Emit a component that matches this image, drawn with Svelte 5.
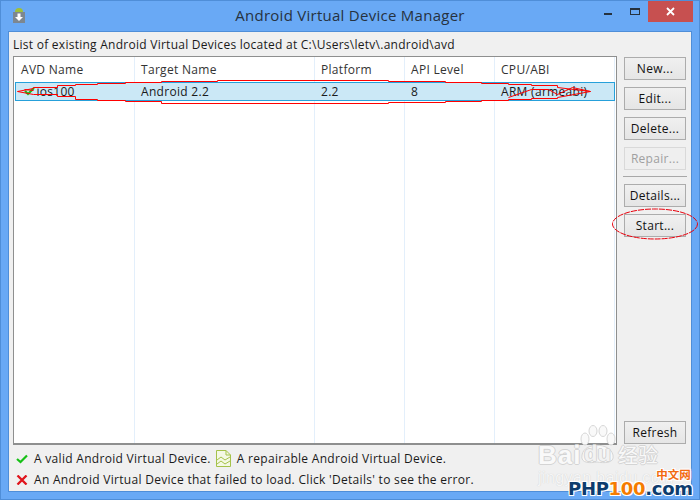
<script>
  const columns = [
    { name: 'AVD Name', width: 120 },
    { name: 'Target Name', width: 180 },
    { name: 'Platform', width: 90 },
    { name: 'API Level', width: 90 },
    { name: 'CPU/ABI', width: 120 },
  ];
  const row = ['ios100', 'Android 2.2', '2.2', '8', 'ARM (armeabi)'];
  const buttonGroups = [
    [{ label: 'New...' }, { label: 'Edit...' }, { label: 'Delete...' }, { label: 'Repair...', disabled: true }],
    [{ label: 'Details...' }, { label: 'Start...' }],
  ];
  // hand-drawn red marks around the selected row
  const scribbles = [
    'M17 91 L33 88 V87 H57 V85 H75 V84 H97 V83 H125 V82 H161 V81 H217 V80 H388 V81 H445 V82 H481 V83 H508 V84 H531 V85 H557 V87 L590 91',
    'M17 91 L33 94 H57 V96 H75 V99 H97 V100 H125 V101 H161 V103 H388 V102 H445 V101 H481 V100 H508 V99 H531 V98 H557 V97 L590 91',
    'M24 89 L33 90 M508 97 L531 89 H548 L557 94 L572 87 L590 91',
  ];
</script>

<div class="window">
  <header class="titlebar">
    <svg class="app-icon" width="14" height="17" viewBox="0 0 14 17">
      <path d="M3 5 A4 4 0 0 1 11 5 Z" fill="#9fbf3b" />
      <rect x="1" y="5" width="12" height="11" fill="#7d8790" />
      <path d="M5.5 6.5 H8.5 V10 H11 L7 14 L3 10 H5.5 Z" fill="#fff" />
    </svg>
    <h1>Android Virtual Device Manager</h1>
    <div class="controls">
      <span class="min"></span>
      <span class="max"></span>
      <span class="close">
        <svg width="9" height="9" viewBox="0 0 9 9">
          <path d="M1 1 L8 8 M8 1 L1 8" stroke="#fff" stroke-width="1.8" />
        </svg>
      </span>
    </div>
  </header>

  <main class="client">
    <p class="location">List of existing Android Virtual Devices located at C:\Users\letv\.android\avd</p>

    <div class="body">
      <div class="table">
        <div class="grid-lines">
          {#each columns as col (col.name)}
            <span style="width: {col.width}px"></span>
          {/each}
        </div>
        <div class="head">
          {#each columns as col (col.name)}
            <span style="width: {col.width}px">{col.name}</span>
          {/each}
        </div>
        <div class="selected">
          {#each row as cell, i (i)}
            <span style="width: {columns[i].width}px">
              {#if i === 0}
                <svg class="check" width="11" height="9" viewBox="0 0 11 9">
                  <path d="M1 4 L4 7 L10 1" fill="none" stroke="#16c016" stroke-width="2.2" />
                </svg>
              {/if}
              {cell}
            </span>
          {/each}
        </div>
      </div>

      <aside class="buttons">
        {#each buttonGroups as group, g (g)}
          {#if g > 0}<hr />{/if}
          {#each group as b (b.label)}
            <button type="button" disabled={b.disabled}>{b.label}</button>
          {/each}
        {/each}
        <button type="button" class="refresh">Refresh</button>
      </aside>
    </div>

    <footer class="legend">
      <div>
        <svg class="legend-icon" width="12" height="10" viewBox="0 0 12 10">
          <path d="M1 5 L4.5 8 L11 1.5" fill="none" stroke="#16c016" stroke-width="2.2" />
        </svg>
        <span>A valid Android Virtual Device.</span>
        <svg class="doc" width="15" height="17" viewBox="0 0 15 17">
          <path d="M.5 .5 H10 L14.5 5 V16.5 H.5 Z" fill="#f4f8e4" stroke="#a5c24a" />
          <path d="M10 .5 V5 H14.5" fill="none" stroke="#a5c24a" />
          <path d="M1 10 L5 7 L9 10 L14 7 M1 14 L5 11 L9 14 L14 11" fill="none" stroke="#a5c24a" />
        </svg>
        <span>A repairable Android Virtual Device.</span>
      </div>
      <div>
        <svg class="legend-icon" width="12" height="10" viewBox="0 0 12 10">
          <path d="M1.5 .5 L10.5 9.5 M10.5 .5 L1.5 9.5" stroke="#e0141c" stroke-width="2.3" />
        </svg>
        <span>An Android Virtual Device that failed to load. Click 'Details' to see the error.</span>
      </div>
    </footer>
  </main>

  <svg class="annotations" width="700" height="500" viewBox="0 0 700 500">
    <g transform="translate(.5 .5)">
      {#each scribbles as d (d)}
        <path {d} fill="none" stroke="#ff0000" stroke-width="1" />
      {/each}
    </g>
    <ellipse cx="655" cy="224" rx="42.5" ry="15" fill="none" stroke="#e8000c" stroke-width="1" stroke-dasharray="6 1" />
  </svg>

  <div class="baidu">
    <svg class="paw" width="38" height="40" viewBox="0 0 38 40">
      <g fill="#f9f9f9" stroke="#d6d6d6" stroke-width="1">
        <ellipse cx="6" cy="14" rx="4" ry="6" />
        <ellipse cx="14" cy="6" rx="4" ry="5.5" />
        <ellipse cx="24" cy="6" rx="4" ry="5.5" />
        <ellipse cx="32" cy="14" rx="4" ry="6" />
        <path d="M3 30 C5 17 31 17 34 30 C36 39 24 38 18 37 C12 38 1 39 3 30 Z" />
      </g>
    </svg>
    <span class="bai">Bai</span><span class="du">du</span><span class="jy">经验</span>
    <span class="site">jingyan.baidu.com</span>
  </div>
  <div class="php"><span class="cn">中文网</span><span class="blue">PHP</span><span class="orange">100</span><span class="blue">.com</span></div>
</div>

<style>
  :global(body) {
    margin: 0;
  }
  .window {
    position: relative;
    width: 700px;
    height: 500px;
    overflow: hidden;
    box-sizing: border-box;
    padding: 0 7px 7px;
    display: flex;
    flex-direction: column;
    background: #69a9f5;
    border: 1px solid #4f8ed8;
    font-family: "Open Sans", "Noto Sans", sans-serif;
    font-size: 12px;
    color: #1a1a1a;
  }
  .titlebar {
    height: 30px;
    flex: none;
    position: relative;
    display: flex;
    justify-content: center;
    align-items: center;
    margin: 0 -7px;
  }
  .app-icon {
    position: absolute;
    left: 11px;
    top: 6px;
  }
  h1 {
    margin: 0 0 2px;
    font-size: 15px;
    font-weight: 400;
    color: #26323f;
    letter-spacing: 0.27px;
  }
  .controls {
    position: absolute;
    right: 6px;
    top: 0;
    display: flex;
    align-items: flex-start;
  }
  .min {
    width: 8px;
    height: 2px;
    background: #26323f;
    margin: 12px 18px 0 0;
  }
  .max {
    width: 8px;
    height: 4px;
    border: 1px solid #26323f;
    border-top-width: 2px;
    margin: 7px 8px 0 0;
  }
  .close {
    width: 45px;
    height: 21px;
    background: #c75050;
    display: flex;
    align-items: center;
    justify-content: center;
  }
  .client {
    flex: 1;
    min-height: 0;
    display: flex;
    flex-direction: column;
    background: #f0f0f0;
    padding: 4px 4px 3px 4px;
    border: 1px solid #4f8ed8;
  }
  .location {
    margin: 0;
    height: 20px;
    line-height: 17px;
    letter-spacing: 0.26px;
  }
  .body {
    flex: 1;
    min-height: 0;
    display: flex;
  }
  .table {
    position: relative;
    flex: none;
    width: 604px;
    box-sizing: border-box;
    height: 389px;
    background: #fff;
    border: 1px solid #8e8f8f;
    border-bottom-width: 2px;
    overflow: hidden;
    letter-spacing: 0.3px;
  }
  .grid-lines {
    position: absolute;
    inset: 0 0 0 1px;
    display: flex;
  }
  .grid-lines span {
    box-sizing: border-box;
    flex: none;
    border-right: 1px solid #e3effb;
  }
  .head {
    position: relative;
    display: flex;
    height: 25px;
    line-height: 26px;
    color: #333;
  }
  .head span,
  .selected span {
    box-sizing: border-box;
    flex: none;
    padding-left: 7px;
  }
  .selected {
    position: relative;
    display: flex;
    height: 19px;
    line-height: 17px;
    margin: 0 1px;
    box-sizing: border-box;
    border: 1px solid #26a0da;
    background: #cbe8f6;
  }
  .selected span:first-child {
    width: 118px !important;
    padding-left: 8px;
  }
  .check {
    margin-right: -2px;
  }
  .buttons {
    flex: 1;
    display: flex;
    flex-direction: column;
    align-items: flex-start;
    gap: 7px;
    padding: 1px 0 0 7px;
    height: 388px;
    box-sizing: border-box;
  }
  button {
    width: 62px;
    height: 23px;
    flex: none;
    padding: 0;
    border: 1px solid #acacac;
    background: linear-gradient(#f0f0f0, #e5e5e5);
    font: inherit;
    letter-spacing: 0.3px;
    color: #111;
  }
  button:disabled {
    color: #a0a0a0;
    background: #efefef;
    border-color: #d9d9d9;
  }
  hr {
    width: 64px;
    margin: -1px 0 0 -1px;
    border: none;
    border-top: 1px solid #a8a8a8;
  }
  .refresh {
    margin-top: auto;
  }
  .legend {
    display: flex;
    flex-direction: column;
    gap: 4px;
    padding-left: 3px;
    line-height: 17px;
  }
  .legend div {
    display: flex;
    align-items: center;
    height: 17px;
    letter-spacing: 0.3px;
  }
  .legend-icon {
    margin-right: 6px;
  }
  .doc {
    margin: 0 6px 0 5px;
  }
  .annotations {
    position: absolute;
    left: -1px;
    top: -1px;
    pointer-events: none;
  }
  .baidu {
    position: absolute;
    left: 536px;
    top: 424px;
    width: 160px;
    height: 62px;
    font-family: "Liberation Sans", sans-serif;
    color: #f9f9f9;
    text-shadow: 1px 0 #d4d4d4, -1px 0 #d4d4d4, 0 1px #d4d4d4, 0 -1px #d4d4d4;
  }
  .baidu span {
    position: absolute;
    line-height: 1;
  }
  .paw {
    position: absolute;
    left: 42px;
    top: 0;
  }
  .bai {
    left: 1px;
    top: 17px;
    font-size: 26px;
    font-weight: 700;
    letter-spacing: 1px;
  }
  .du {
    left: 47px;
    top: 18px;
    font-size: 22px;
    font-weight: 700;
    color: #f2f2f2;
  }
  .jy {
    left: 81px;
    top: 20px;
    font-family: "Noto Sans CJK SC", sans-serif;
    font-size: 20px;
  }
  .site {
    left: 1px;
    top: 45px;
    font-size: 16px;
    letter-spacing: 0.4px;
    color: #f6f6f6;
    text-shadow: 0 0 1px #c8c8c8;
    white-space: nowrap;
  }
  .php {
    position: absolute;
    left: 567px;
    top: 479px;
    font-family: "DejaVu Sans", sans-serif;
    font-weight: 700;
    font-size: 18px;
    line-height: 18px;
    letter-spacing: -0.3px;
    white-space: nowrap;
    text-shadow: 1px 1px #fff, -1px -1px #fff, 1px -1px #fff, -1px 1px #fff;
  }
  .blue {
    color: #0c3c6e;
  }
  .orange {
    color: #f57c00;
  }
  .cn {
    position: absolute;
    right: 2px;
    top: -12px;
    color: #f26a10;
    font-family: "Noto Sans CJK SC", sans-serif;
    font-size: 11.5px;
    font-weight: 700;
    line-height: 12px;
    letter-spacing: 0;
  }
</style>
